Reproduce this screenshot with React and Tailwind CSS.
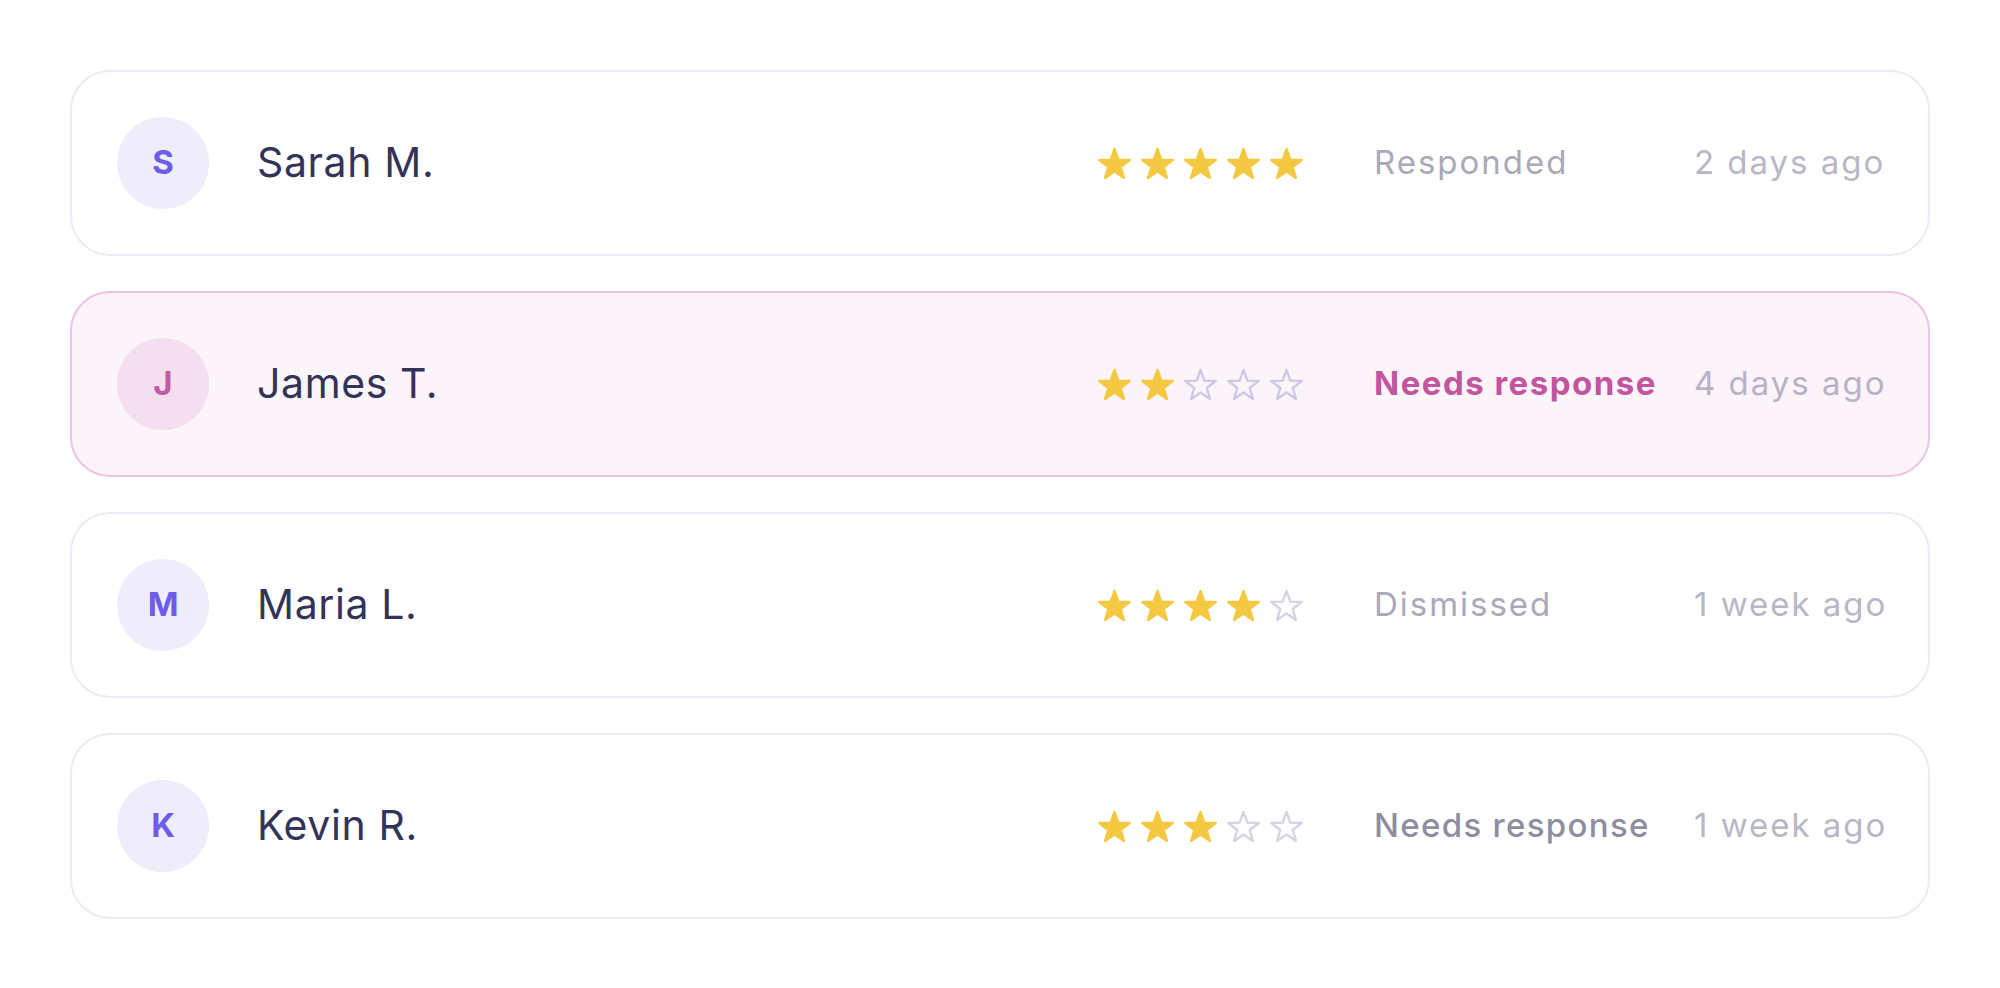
import React from 'react';

const reviews = [
  { initial: 'S', name: 'Sarah M.', rating: 5, status: 'Responded', tone: 'done', time: '2 days ago' },
  { initial: 'J', name: 'James T.', rating: 2, status: 'Needs response', tone: 'urgent', time: '4 days ago' },
  { initial: 'M', name: 'Maria L.', rating: 4, status: 'Dismissed', tone: 'done', time: '1 week ago' },
  { initial: 'K', name: 'Kevin R.', rating: 3, status: 'Needs response', tone: 'pending', time: '1 week ago' },
];

const STAR =
  '12,2 14.65,9.36 22.46,9.6 16.28,14.39 18.47,21.9 12,17.5 5.53,21.9 7.72,14.39 1.54,9.6 9.35,9.36';

const Star = ({ filled, urgent }) => (
  <svg viewBox="0 0 24 24" className="w-[35px] h-[35px] shrink-0">
    {filled ? (
      <polygon points={STAR} fill="#f5c842" stroke="#f5c842" strokeWidth="1.6" strokeLinejoin="round" />
    ) : (
      <polygon
        points={STAR}
        fill="none"
        stroke={urgent ? '#cdc7e8' : '#d4d4e0'}
        strokeWidth="1.6"
        strokeLinejoin="round"
      />
    )}
  </svg>
);

const statusClass = {
  done: 'font-normal text-[#a9a9b8] tracking-[0.06em]',
  pending: 'font-medium text-[#8e8ea0] tracking-[0.04em]',
  urgent: 'font-bold text-[#c2559f] tracking-[0.045em]',
};

const ReviewRow = ({ review }) => {
  const urgent = review.tone === 'urgent';
  return (
    <div
      className={
        urgent
          ? 'h-[186px] flex items-center px-[45px] rounded-[40px] border-2 border-[#eec3e1] bg-[#fbf4f9]'
          : 'h-[186px] flex items-center px-[45px] rounded-[40px] border-2 border-[#ebebf4] bg-white'
      }
    >
      <div
        className={
          urgent
            ? 'w-[92px] h-[92px] rounded-full bg-[#f3dfef] text-[#c25ba6] flex items-center justify-center text-[33px] font-bold'
            : 'w-[92px] h-[92px] rounded-full bg-[#efedfc] text-[#6c5ce7] flex items-center justify-center text-[33px] font-bold'
        }
      >
        {review.initial}
      </div>
      <div className="ml-[48px] flex-1 text-[41px] text-[#33335a] tracking-[0.015em]">{review.name}</div>
      <div className="flex items-center gap-[8px]">
        {[1, 2, 3, 4, 5].map((n) => (
          <Star key={n} filled={n <= review.rating} urgent={urgent} />
        ))}
      </div>
      <div className={`ml-[70px] w-[320px] text-[33px] whitespace-nowrap ${statusClass[review.tone]}`}>
        {review.status}
      </div>
      <div
        className={
          urgent
            ? 'w-[189px] text-right text-[33px] whitespace-nowrap text-[#b9b1c8] tracking-[0.06em]'
            : 'w-[189px] text-right text-[33px] whitespace-nowrap text-[#b7b7c5] tracking-[0.06em]'
        }
      >
        {review.time}
      </div>
    </div>
  );
};

const App = () => {
  return (
    <div className="min-h-screen bg-white p-[70px] font-['Inter',sans-serif]">
      <div className="flex flex-col gap-[35px]">
        {reviews.map((r) => (
          <ReviewRow key={r.name} review={r} />
        ))}
      </div>
    </div>
  );
};

export default App;
